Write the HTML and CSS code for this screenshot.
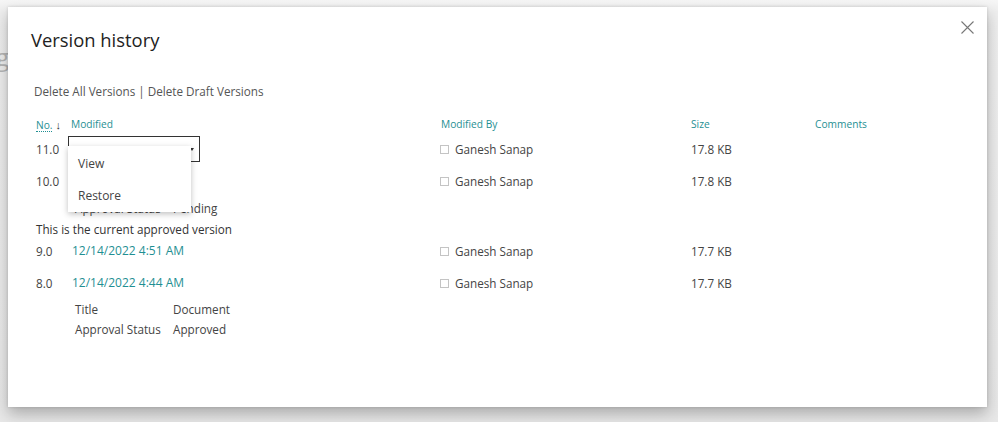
FILE: index.html
```html
<!DOCTYPE html>
<html>
<head>
<meta charset="utf-8">
<link rel="stylesheet" href="styles.css">
</head>
<body>
<div class="backdrop">
  <span class="behind">g</span>
</div>
<div class="dialog">
  <button class="close" aria-label="Close">
    <svg width="13" height="13" viewBox="0 0 13 13"><path d="M0.5 0.5L12.5 12.5M12.5 0.5L0.5 12.5" stroke="#777" stroke-width="1.1" fill="none"/></svg>
  </button>
  <h1 class="title">Version history</h1>
  <div class="actions">Delete All Versions | Delete Draft Versions</div>
  <div class="grid head">
    <div><span class="no">No.</span><span class="arrow">↓</span></div>
    <div>Modified</div>
    <div>Modified By</div>
    <div>Size</div>
    <div>Comments</div>
  </div>
  <div class="grid row r11">
    <div>11.0</div>
    <div class="mod"><div class="selbox"><span class="caret"></span></div>
      <div class="menu">
        <div class="mi">View</div>
        <div class="mi">Restore</div>
      </div>
    </div>
    <div class="by"><span class="cb"></span>Ganesh Sanap</div>
    <div>17.8 KB</div>
    <div></div>
  </div>
  <div class="grid row r10">
    <div>10.0</div>
    <div class="date">12/14/2022 5:02 AM</div>
    <div class="by"><span class="cb"></span>Ganesh Sanap</div>
    <div>17.8 KB</div>
    <div></div>
  </div>
  <div class="props p10">
    <div class="pk">Approval Status</div><div>Pending</div>
  </div>
  <div class="current">This is the current approved version</div>
  <div class="grid row r9">
    <div>9.0</div>
    <div class="date">12/14/2022 4:51 AM</div>
    <div class="by"><span class="cb"></span>Ganesh Sanap</div>
    <div>17.7 KB</div>
    <div></div>
  </div>
  <div class="grid row r8">
    <div>8.0</div>
    <div class="date">12/14/2022 4:44 AM</div>
    <div class="by"><span class="cb"></span>Ganesh Sanap</div>
    <div>17.7 KB</div>
    <div></div>
  </div>
  <div class="props p8">
    <div class="pk">Title</div><div>Document</div>
    <div class="pk">Approval Status</div><div>Approved</div>
  </div>
</div>
</body>
</html>
```
FILE: styles.css
```css
* { box-sizing: border-box; }
html, body { margin: 0; padding: 0; }
body {
  width: 998px;
  height: 422px;
  overflow: hidden;
  background: #ebebeb;
  font-family: "Open Sans", "Noto Sans", sans-serif;
  color: #333;
  position: relative;
}
.backdrop {
  position: absolute;
  inset: 0;
  background: linear-gradient(#f6f6f6 0, #eeeeee 12px, #e8e8e8 100%);
}
.behind {
  position: absolute;
  left: -4px;
  top: 40px;
  font-size: 24px;
  color: #b5b5b5;
}
.dialog {
  position: absolute;
  left: 8px;
  top: 7px;
  width: 979px;
  height: 400px;
  background: #fff;
  box-shadow: 0 7px 14px rgba(0,0,0,0.26), 0 0 3px rgba(0,0,0,0.14);
  padding: 0 0 0 28px;
}
.close {
  position: absolute;
  right: 13px;
  top: 14px;
  width: 13px;
  height: 13px;
  padding: 0;
  border: 0;
  background: none;
  display: flex;
}
.title {
  margin: 0;
  padding-top: 20px;
  margin-left: -5px;
  font-size: 18.4px;
  font-weight: 400;
  line-height: 26px;
  color: #222;
}
.actions {
  margin-top: 29px;
  margin-left: -2px;
  font-size: 11.7px;
  line-height: 18px;
  color: #555;
}
.grid {
  display: grid;
  grid-template-columns: 35px 370px 250px 124px 1fr;
}
.head {
  margin-top: 17px;
  font-size: 10.2px;
  line-height: 15px;
  color: #1f8f93;
}
.no {
  border-bottom: 1px dotted #1f8f93;
  line-height: 12px;
  display: inline-block;
}
.arrow {
  color: #333;
  font-size: 11px;
  font-weight: 600;
  margin-left: 3px;
}
.row {
  font-size: 11.7px;
  line-height: 18px;
  color: #444;
}
.r11 { margin-top: 7px; height: 32px; }
.r10 { height: 26px; }
.r9 { margin-top: 3px; height: 32px; }
.r8 { height: 25px; }
.mod { position: relative; }
.date { color: #1f8f93; padding-left: 1px; font-size: 12px; }
.by {
  display: flex;
  align-items: center;
  align-self: start;
  height: 18px;
  margin-left: -1px;
}
.cb {
  width: 9px;
  height: 9px;
  border: 1px solid #c4c4c4;
  margin-right: 6px;
}
.selbox {
  position: absolute;
  left: -3px;
  top: -4px;
  width: 132px;
  height: 26px;
  border: 1px solid #333;
}
.caret {
  position: absolute;
  right: 5px;
  top: 11px;
  width: 0;
  height: 0;
  border-left: 2.5px solid transparent;
  border-right: 2.5px solid transparent;
  border-top: 3px solid #333;
}
.menu {
  position: absolute;
  left: -3px;
  top: 6px;
  width: 123px;
  height: 66px;
  background: #fff;
  box-shadow: 0 2px 6px rgba(0,0,0,0.25);
  padding-top: 5px;
  z-index: 2;
}
.mi {
  height: 32px;
  line-height: 26px;
  padding-left: 10px;
  font-size: 12px;
  color: #444;
}
.props {
  display: grid;
  grid-template-columns: 98px 1fr;
  margin-left: 39px;
  font-size: 11.7px;
  line-height: 20px;
  color: #444;
}
.current {
  margin-top: 1px;
  font-size: 11.7px;
  line-height: 20px;
  color: #333;
}
```
